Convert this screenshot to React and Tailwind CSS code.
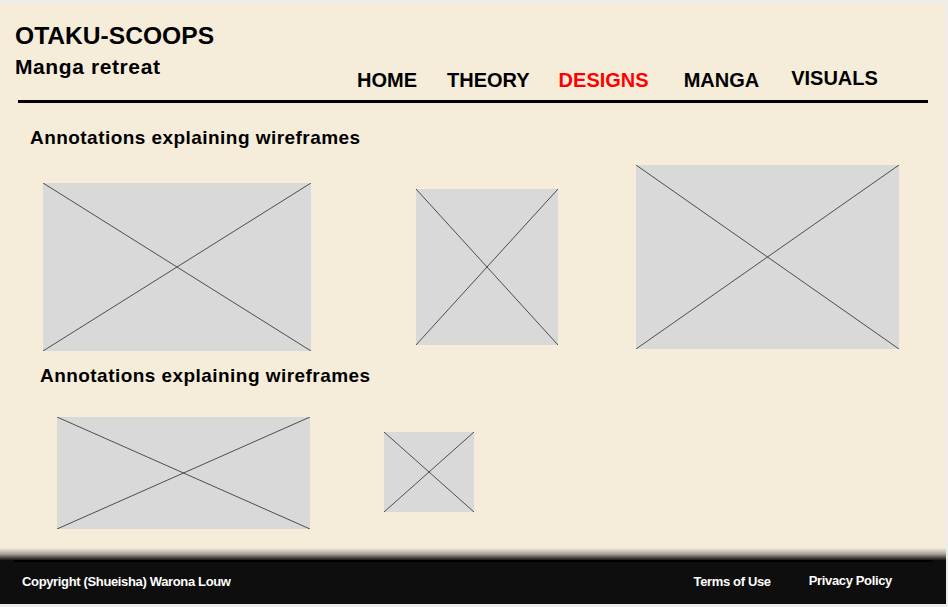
const NAV = [
  { label: "HOME", cls: "" },
  { label: "THEORY", cls: "ml-[30px]" },
  { label: "DESIGNS", cls: "ml-[29px] text-[#ff0000]" },
  { label: "MANGA", cls: "ml-[35px]" },
  { label: "VISUALS", cls: "ml-[32px] -mt-[2px]" },
];

// grey wireframe placeholder with a cross through it
function Placeholder({ className }) {
  return (
    <div className={`shrink-0 bg-[#d9d9d9] ${className}`}>
      <svg className="block w-full h-full" viewBox="0 0 100 100" preserveAspectRatio="none">
        <line x1="0" y1="0" x2="100" y2="100" stroke="#4d4d4d" strokeWidth="1" vectorEffect="non-scaling-stroke" />
        <line x1="100" y1="0" x2="0" y2="100" stroke="#4d4d4d" strokeWidth="1" vectorEffect="non-scaling-stroke" />
      </svg>
    </div>
  );
}

export default function App() {
  return (
    <div className="w-[948px] h-[607px] bg-[#ececec] pt-[3px] pr-[2px] pb-[3px] font-['Liberation_Sans',Arial,sans-serif] text-black">
      <div className="flex flex-col h-full bg-[#f5edda]">
        <header className="flex items-start">
          <div className="w-[357px] shrink-0 pl-[15px] pt-[19px]">
            <h1 className="text-[24.6px] leading-[28px] font-bold">OTAKU-SCOOPS</h1>
            <p className="mt-[4px] text-[21px] leading-[26px] font-bold tracking-[0.6px]">Manga retreat</p>
          </div>
          <nav className="flex items-start pt-[65px]">
            {NAV.map((item) => (
              <a key={item.label} className={`text-[20px] leading-[24px] font-bold ${item.cls}`}>
                {item.label}
              </a>
            ))}
          </nav>
        </header>
        <div className="mt-[8px] ml-[18px] w-[910px] h-[3px] bg-black" />

        <main className="flex-1">
          <h2 className="mt-[24px] pl-[30px] text-[19px] leading-[22px] font-bold tracking-[0.45px]">
            Annotations explaining wireframes
          </h2>
          <div className="flex items-start">
            <Placeholder className="ml-[43px] mt-[34px] w-[268px] h-[168px]" />
            <Placeholder className="ml-[105px] mt-[40px] w-[142px] h-[156px]" />
            <Placeholder className="ml-[78px] mt-[16px] w-[263px] h-[184px]" />
          </div>

          <h2 className="mt-[14px] pl-[40px] text-[19px] leading-[22px] font-bold tracking-[0.45px]">
            Annotations explaining wireframes
          </h2>
          <div className="flex items-start">
            <Placeholder className="ml-[57px] mt-[30px] w-[253px] h-[112px]" />
            <Placeholder className="ml-[74px] mt-[45px] w-[90px] h-[80px]" />
          </div>
        </main>

        <div className="h-[12px] bg-gradient-to-b from-[#f5edda] via-[#a8a396] to-[#1c1c1c]" />
        <footer className="h-[44px] bg-[#0e0e0e] text-white">
          <div className="ml-[14px] w-[918px] h-[2px] bg-black" />
          <div className="flex items-start pt-[12px] text-[13px] leading-[16px] font-bold tracking-[-0.35px]">
            <span className="ml-[22px]">Copyright (Shueisha) Warona Louw</span>
            <span className="ml-auto">Terms of Use</span>
            <span className="ml-[38px] mr-[54px] -mt-[1px]">Privacy Policy</span>
          </div>
        </footer>
      </div>
    </div>
  );
}
